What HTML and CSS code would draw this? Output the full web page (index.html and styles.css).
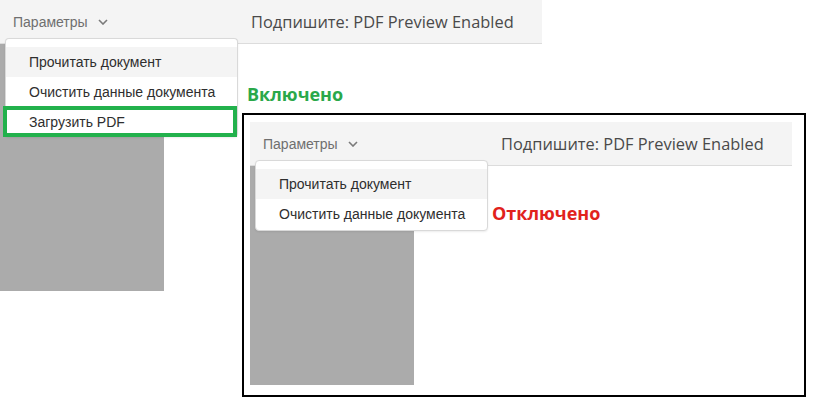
FILE: index.html
```html
<!DOCTYPE html>
<html lang="ru">
<head>
    <meta charset="UTF-8">
    <meta name="viewport" content="width=device-width, initial-scale=1.0">
    <title>Подписание: PDF Preview</title>
    <link rel="stylesheet" href="styles.css">
</head>
<body>
    <div class="canvas">
        <!-- Screenshot: enabled -->
        <div class="shot shot-on">
            <div class="toolbar">
                <span class="menu-btn">Параметры
                    <svg class="chevron" width="10" height="6" viewBox="0 0 10 6"><path d="M1 1l4 4 4-4" fill="none" stroke="#7a7a7a" stroke-width="1.6"/></svg>
                </span>
                <span class="title">Подпишите: PDF Preview Enabled</span>
            </div>
            <div class="doc"></div>
            <div class="menu">
                <div class="item active">Прочитать документ</div>
                <div class="item">Очистить данные документа</div>
                <div class="item">Загрузить PDF</div>
            </div>
            <div class="mark"></div>
        </div>

        <div class="label label-on">Включено</div>

        <!-- Screenshot: disabled -->
        <div class="frame">
            <div class="shot shot-off">
                <div class="toolbar">
                    <span class="menu-btn">Параметры
                        <svg class="chevron" width="10" height="6" viewBox="0 0 10 6"><path d="M1 1l4 4 4-4" fill="none" stroke="#7a7a7a" stroke-width="1.6"/></svg>
                    </span>
                    <span class="title">Подпишите: PDF Preview Enabled</span>
                </div>
                <div class="doc"></div>
                <div class="menu">
                    <div class="item active">Прочитать документ</div>
                    <div class="item">Очистить данные документа</div>
                </div>
            </div>
            <div class="label label-off">Отключено</div>
        </div>
    </div>
</body>
</html>
```

FILE: styles.css
```css
body {
    margin: 0;
    background-color: #fff;
    font-family: 'Liberation Sans', Arial, sans-serif;
}

.canvas {
    position: relative;
    width: 829px;
    height: 420px;
    overflow: hidden;
}

.shot {
    position: relative;
    width: 542px;
}

.shot-on {
    position: absolute;
    left: 0;
    top: 0;
}

.toolbar {
    display: flex;
    align-items: center;
    height: 43px;
    padding-left: 13px;
    background-color: #f4f4f4;
    border-bottom: 1px solid #dcdcdc;
}

.menu-btn {
    display: flex;
    align-items: center;
    width: 238px;
    font-size: 14px;
    color: #6f6f6f;
}

.chevron {
    margin-left: 10px;
    margin-top: 1px;
}

.title {
    font-family: 'Open Sans', sans-serif;
    font-size: 16.4px;
    color: #4a4a4a;
}

.doc {
    width: 164px;
    height: 247px;
    background-color: #ababab;
}

.shot-off .doc {
    height: 219px;
}

.menu {
    position: absolute;
    left: 5px;
    top: 38px;
    width: 231px;
    padding: 8px 0 1px;
    background-color: #fff;
    border: 1px solid #d9d9d9;
    border-radius: 4px;
    box-shadow: 0 1px 2px rgba(0, 0, 0, 0.08);
}

.shot-on .menu {
    padding-bottom: 0;
    border-bottom: none;
}

.item {
    height: 30px;
    line-height: 30px;
    padding-left: 23px;
    font-size: 14px;
    color: #2e2e2e;
}

.item.active {
    background-color: #f4f4f4;
}

.mark {
    position: absolute;
    left: 3px;
    top: 106px;
    width: 226px;
    height: 23px;
    border: 4px solid #22b14c;
}

.label {
    position: absolute;
    font-family: 'Open Sans', sans-serif;
    font-weight: 700;
    font-size: 18px;
}

.label-on {
    left: 247px;
    top: 82px;
    color: #2aa84a;
}

.frame {
    position: absolute;
    left: 242px;
    top: 113px;
    width: 554px;
    height: 273px;
    padding: 7px 0 0 6px;
    border: 2px solid #000;
}

.label-off {
    left: 248px;
    top: 86px;
    color: #e1221c;
}
```
